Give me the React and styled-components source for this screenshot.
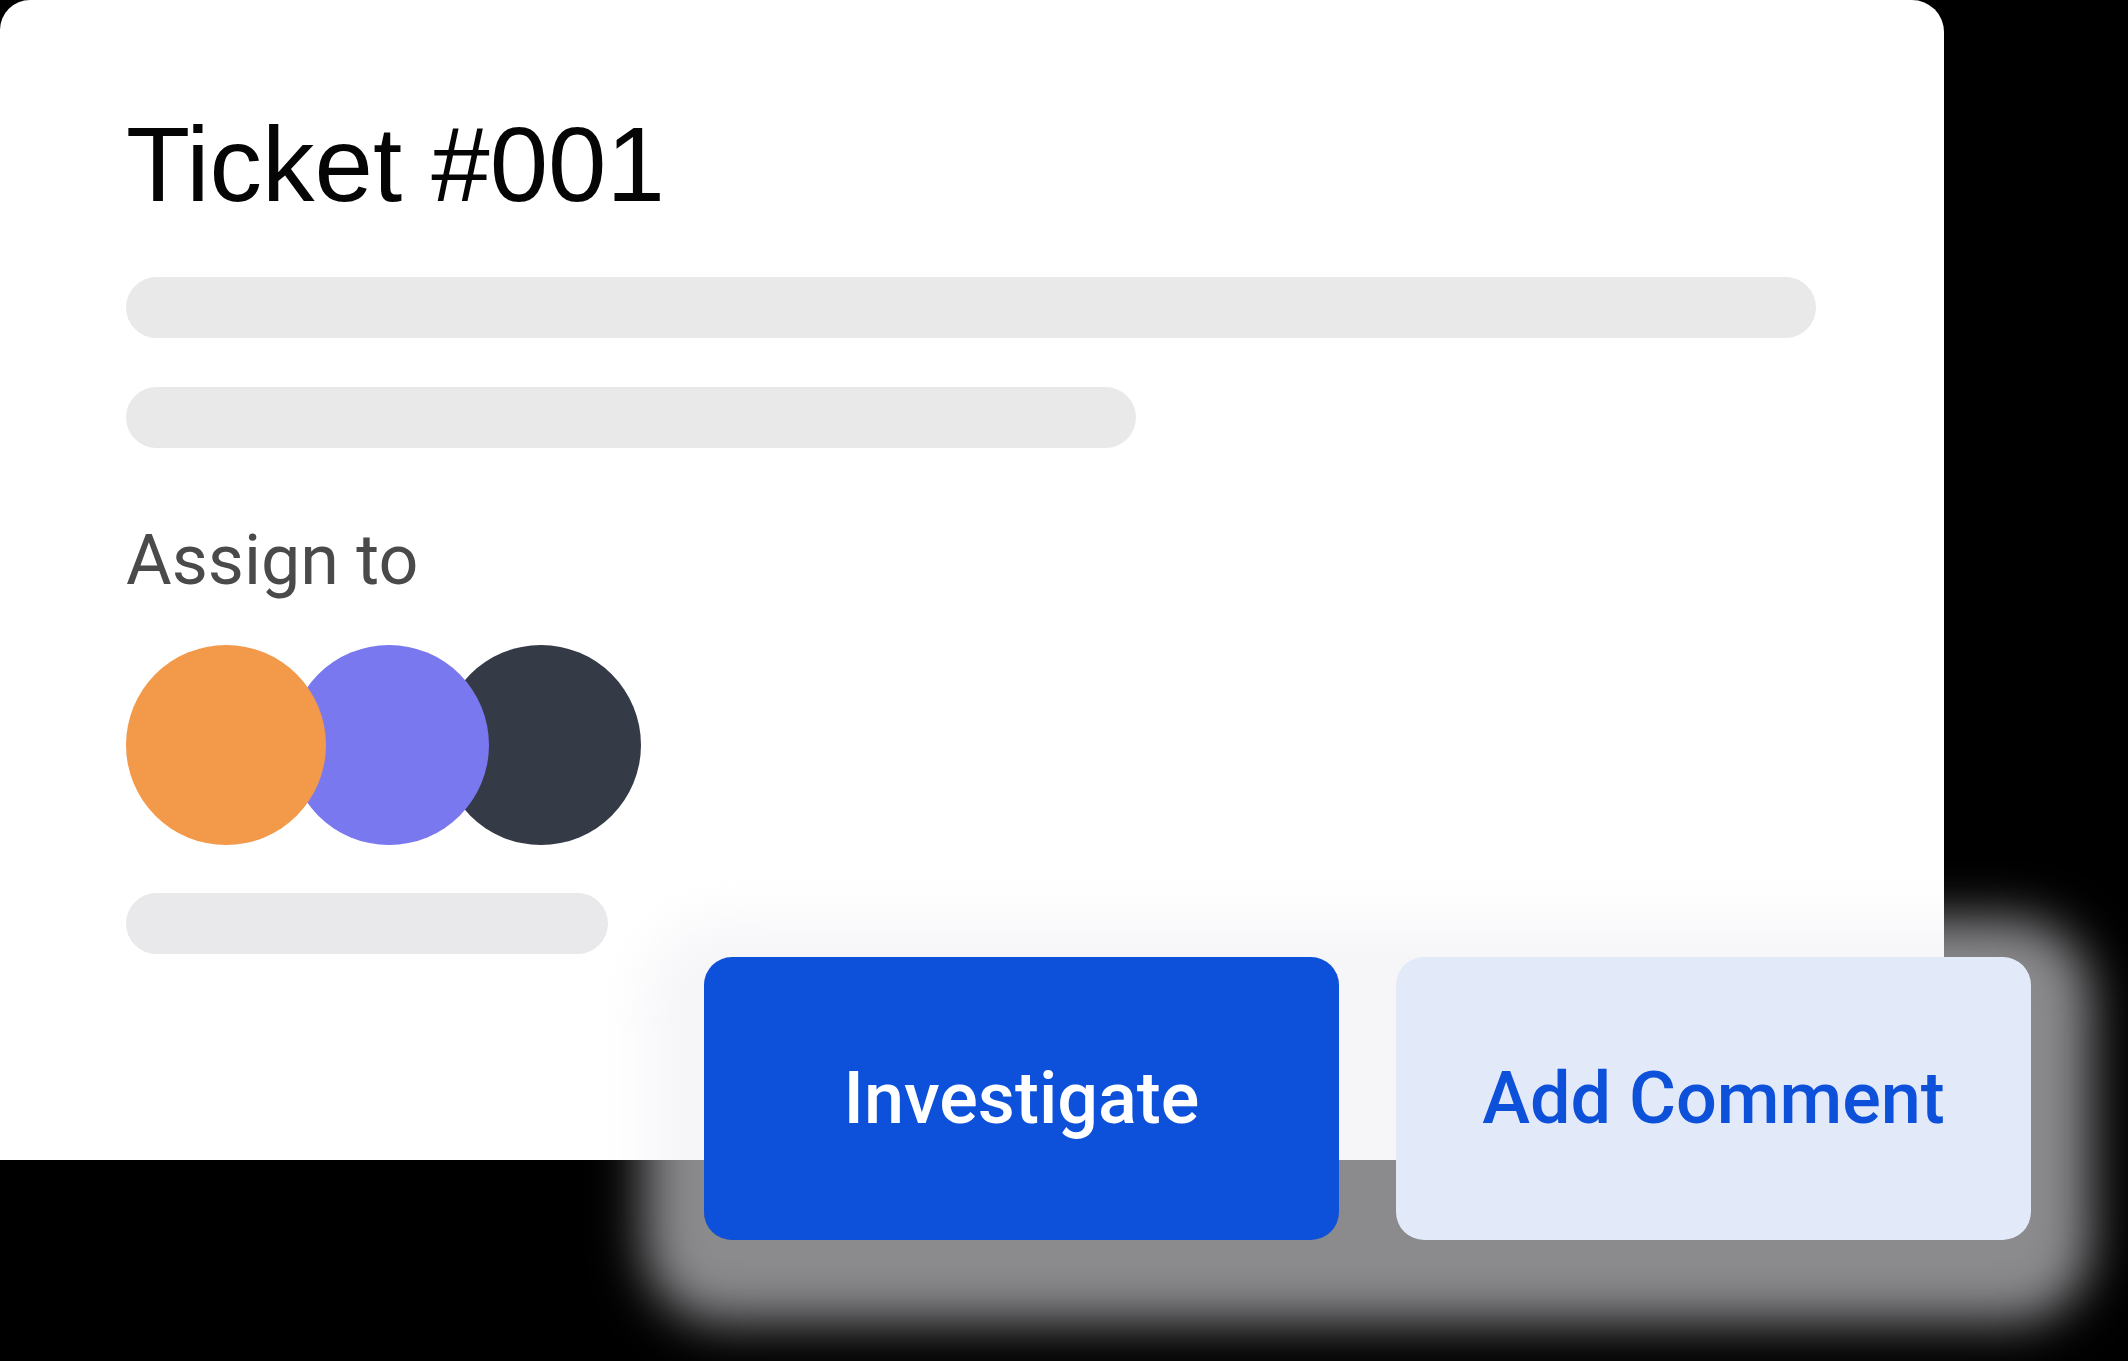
import React from "react";
import styled, { createGlobalStyle } from "styled-components";

const GlobalStyle = createGlobalStyle`
  html, body {
    margin: 0;
    padding: 0;
    background: #000;
  }
  body {
    font-family: "Liberation Sans", Arial, sans-serif;
  }
`;

const assignees = [
  { id: "a1", color: "#f2994a", overlap: 0 },
  { id: "a2", color: "#7a78ef", overlap: 37 },
  { id: "a3", color: "#343a46", overlap: 48 },
];

const App = () => {
  return (
    <>
      <GlobalStyle />
      <Stage>
        <Card>
          <Title>Ticket #001</Title>
          <Placeholder $width={1690} $top={60} />
          <Placeholder $width={1010} $top={49} />
          <Label>Assign to</Label>
          <Avatars>
            {assignees.map((a, i) => (
              <Avatar
                key={a.id}
                $color={a.color}
                $overlap={a.overlap}
                $layer={assignees.length - i}
              />
            ))}
          </Avatars>
          <Placeholder $width={482} $top={48} $color="#e9e8ea" />
        </Card>
        <Actions>
          <Button $variant="primary">Investigate</Button>
          <Button $variant="secondary">Add Comment</Button>
        </Actions>
      </Stage>
    </>
  );
};

const Stage = styled.div`
  position: relative;
  width: 2128px;
  height: 1361px;
  overflow: hidden;
  background: #000;
`;

const Card = styled.div`
  box-sizing: border-box;
  display: flex;
  flex-direction: column;
  align-items: flex-start;
  width: 1944px;
  height: 1160px;
  padding: 112px 0 0 126px;
  background: #fff;
  border-radius: 30px 32px 0 0;
`;

const Title = styled.h1`
  margin: 0;
  font-family: "Liberation Sans", Arial, sans-serif;
  font-size: 105px;
  line-height: 105px;
  font-weight: 400;
  color: #050505;
`;

const Placeholder = styled.div`
  width: ${(p) => p.$width}px;
  height: 61px;
  margin-top: ${(p) => p.$top}px;
  border-radius: 31px;
  background: ${(p) => p.$color || "#e9e9e9"};
`;

const Label = styled.div`
  margin-top: 77px;
  font-family: Roboto, "Liberation Sans", sans-serif;
  font-size: 70px;
  line-height: 70px;
  font-weight: 400;
  color: #4a4a4a;
`;

const Avatars = styled.div`
  display: flex;
  margin-top: 50px;
`;

const Avatar = styled.div`
  width: 200px;
  height: 200px;
  border-radius: 50%;
  background: ${(p) => p.$color};
  margin-left: -${(p) => p.$overlap}px;
  position: relative;
  z-index: ${(p) => p.$layer};
`;

const Actions = styled.div`
  position: absolute;
  left: 704px;
  top: 957px;
  display: flex;
  gap: 57px;

  &::before {
    content: "";
    position: absolute;
    inset: 0;
    border-radius: 28px;
    background: rgba(240, 240, 244, 0.58);
    box-shadow: 0 22px 50px 60px rgba(240, 240, 244, 0.58);
    z-index: 0;
  }
`;

const Button = styled.button`
  position: relative;
  z-index: 1;
  width: 635px;
  height: 283px;
  border: none;
  border-radius: 28px;
  cursor: pointer;
  font-family: Roboto, "Liberation Sans", sans-serif;
  font-size: 72px;
  font-weight: 500;
  background: ${(p) => (p.$variant === "primary" ? "#0d50d9" : "#e2e9f8")};
  color: ${(p) => (p.$variant === "primary" ? "#ffffff" : "#0d50d9")};
`;

export default App;
